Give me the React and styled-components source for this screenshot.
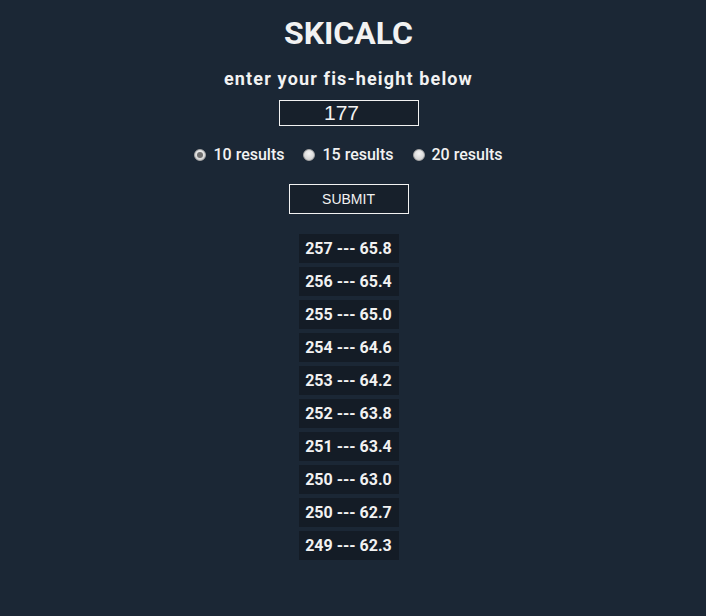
import React, { useState } from "react";
import styled, { createGlobalStyle } from "styled-components";

const GlobalStyle = createGlobalStyle`
  html, body {
    margin: 0;
    padding: 0;
    background: #1b2735;
    font-family: Roboto, "Liberation Sans", sans-serif;
    color: #f2f2f2;
  }
`;

const Page = styled.div`
  display: flex;
  flex-direction: column;
  align-items: center;
  min-height: 616px;
  padding: 14px 9px 0 0;
  box-sizing: border-box;
`;

const Title = styled.h1`
  margin: 0;
  font-size: 32px;
  font-weight: 700;
  line-height: 38px;
`;

const SubTitle = styled.h3`
  margin: 15px 0 0;
  font-size: 18px;
  font-weight: 700;
  letter-spacing: 1.15px;
  line-height: 24px;
`;

const HeightInput = styled.input`
  margin-top: 9px;
  width: 140px;
  height: 26px;
  box-sizing: border-box;
  background: #17202b;
  border: 1px solid #f2f2f2;
  color: #f2f2f2;
  font-family: "Liberation Sans", Arial, sans-serif;
  font-size: 21px;
  text-align: center;
  padding: 0 14px 0 0;
  outline: none;
`;

const RadioRow = styled.div`
  display: flex;
  gap: 19px;
  margin-top: 19px;
`;

const RadioLabel = styled.label`
  display: flex;
  align-items: center;
  gap: 7px;
  font-size: 16px;
  font-weight: 500;
  cursor: pointer;
`;

const RadioDot = styled.span`
  width: 12px;
  height: 12px;
  border-radius: 50%;
  box-sizing: border-box;
  background: radial-gradient(circle at 50% 35%, #f4f4f4, #c9c9c9);
  border: 1px solid #a8a8a8;
  display: flex;
  align-items: center;
  justify-content: center;

  &::after {
    content: "";
    width: 6px;
    height: 6px;
    border-radius: 50%;
    background: ${(p) => (p.$checked ? "#6e6e6e" : "transparent")};
  }
`;

const SubmitButton = styled.button`
  margin-top: 20px;
  width: 120px;
  height: 30px;
  background: #17202b;
  border: 1px solid #f2f2f2;
  color: #f2f2f2;
  font-family: "Liberation Sans", Arial, sans-serif;
  font-size: 14px;
  cursor: pointer;
`;

const ResultList = styled.div`
  display: flex;
  flex-direction: column;
  gap: 4px;
  margin-top: 20px;
`;

const ResultItem = styled.div`
  width: 100px;
  height: 29px;
  background: #141c26;
  display: flex;
  align-items: center;
  justify-content: center;
  font-size: 16px;
  font-weight: 700;
`;

const results = [
  ["257", "65.8"],
  ["256", "65.4"],
  ["255", "65.0"],
  ["254", "64.6"],
  ["253", "64.2"],
  ["252", "63.8"],
  ["251", "63.4"],
  ["250", "63.0"],
  ["250", "62.7"],
  ["249", "62.3"],
];

export default function App() {
  const [count, setCount] = useState(10);
  const [height, setHeight] = useState("177");

  return (
    <Page>
      <GlobalStyle />
      <Title>SKICALC</Title>
      <SubTitle>enter your fis-height below</SubTitle>
      <HeightInput value={height} onChange={(e) => setHeight(e.target.value)} />
      <RadioRow>
        {[10, 15, 20].map((n) => (
          <RadioLabel key={n} onClick={() => setCount(n)}>
            <RadioDot $checked={count === n} />
            {n} results
          </RadioLabel>
        ))}
      </RadioRow>
      <SubmitButton>SUBMIT</SubmitButton>
      <ResultList>
        {results.slice(0, count).map(([len, val], i) => (
          <ResultItem key={i}>
            {len} --- {val}
          </ResultItem>
        ))}
      </ResultList>
    </Page>
  );
}
